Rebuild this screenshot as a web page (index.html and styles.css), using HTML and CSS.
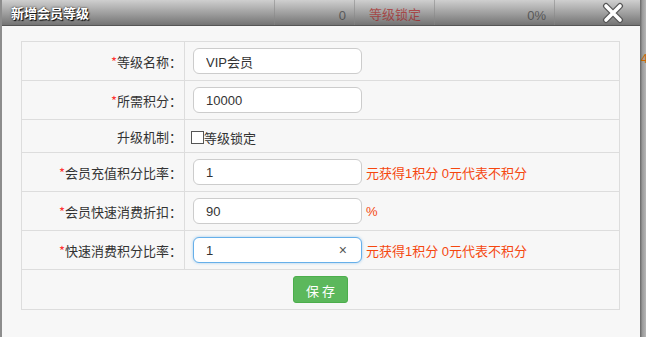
FILE: index.html
```html
<!doctype html>
<html>
<head>
<meta charset="utf-8">
<title>新增会员等级</title>
<link rel="stylesheet" href="styles.css">
</head>
<body>
<div class="wrap">
	<div class="dlg">
		<div class="dlg-head">
			<div class="ghost">
				<span class="g1"></span>
				<span class="g2">0</span>
				<span class="g3">等级锁定</span>
				<span class="g4">0%</span>
				<span class="g5"></span>
			</div>
			<h2 class="dlg-title">新增会员等级</h2>
			<a class="dlg-close" href="javascript:;">
				<svg width="24" height="22" viewBox="0 0 24 22"><path d="M5 4L19 18M19 4L5 18" stroke="#555" stroke-width="6" stroke-linecap="round"/><path d="M5 4L19 18M19 4L5 18" stroke="#fff" stroke-width="3.6" stroke-linecap="round"/></svg>
			</a>
		</div>
		<div class="dlg-body">
			<table class="form">
				<tr>
					<th><em>*</em>等级名称：</th>
					<td><input class="ipt" type="text" value="VIP会员"></td>
				</tr>
				<tr>
					<th><em>*</em>所需积分：</th>
					<td><input class="ipt" type="text" value="10000"></td>
				</tr>
				<tr class="chk-row">
					<th>升级机制：</th>
					<td><label class="chk"><span class="box"></span>等级锁定</label></td>
				</tr>
				<tr>
					<th><em>*</em>会员充值积分比率：</th>
					<td><input class="ipt" type="text" value="1"><span class="tip">元获得1积分 0元代表不积分</span></td>
				</tr>
				<tr>
					<th><em>*</em>会员快速消费折扣：</th>
					<td><input class="ipt" type="text" value="90"><span class="tip">%</span></td>
				</tr>
				<tr>
					<th><em>*</em>快速消费积分比率：</th>
					<td><span class="ipt focus"><span>1</span><i class="clr">×</i></span><span class="tip">元获得1积分 0元代表不积分</span></td>
				</tr>
				<tr class="btn-row">
					<td colspan="2"><a class="btn-save" href="javascript:;">保 存</a></td>
				</tr>
			</table>
		</div>
	</div>
	<div class="side"><span>4</span></div>
</div>
</body>
</html>
```

FILE: styles.css
```css
*{ margin:0; padding:0; box-sizing:border-box;}
body{ width:646px; height:337px; overflow:hidden; background:#8a8a8a; font:13px "Liberation Sans","Noto Sans CJK SC",sans-serif; color:#333;}
.wrap{ display:flex; height:337px;}
.dlg{ width:640px; display:flex; flex-direction:column; background:#f7f7f7; border-left:2px solid #8d8d8d;}
.dlg-head{ position:relative; height:26px; background:linear-gradient(#cfcfcf,#a6a6a6 45%,#747474); border-bottom:1px solid #555; display:flex; align-items:center;}
.ghost{ position:absolute; left:-2px; top:0; height:25px; display:flex; opacity:.55; color:#222;}
.ghost span{ display:flex; align-items:flex-end; justify-content:flex-end; padding:0 8px 2px 0; border-right:1px solid #888; height:25px;}
.ghost .g1{ width:275px;}
.ghost .g2{ width:80px;}
.ghost .g3{ width:80px; justify-content:flex-start; padding-left:14px; color:#a00;}
.ghost .g4{ width:120px;}
.ghost .g5{ width:80px; border-right:0;}
.dlg-title{ position:relative; margin-left:9px; font:bold 13px "Noto Sans CJK SC",sans-serif; color:#fff; text-shadow:0 0 2px #222,1px 1px 1px #000;}
.dlg-close{ position:absolute; right:15px; top:2px; display:block;}
.dlg-body{ flex:1; padding:15px 0 0 19px;}
.form{ width:599px; border-collapse:collapse; background:#f7f7f7;}
.form th,.form td{ border:1px solid #ddd; height:39px; font-family:"Noto Sans CJK SC",sans-serif;}
.form th{ width:163px; text-align:right; font-weight:normal; padding-right:2px; color:#333;}
.form th em{ font-style:normal; color:#f33;}
.form td{ padding-left:8px; white-space:nowrap;}
.chk-row th,.chk-row td{ height:33px;}
.ipt{ display:inline-flex; align-items:center; justify-content:space-between; vertical-align:middle; width:169px; height:26px; border:1px solid #ccc; border-radius:6px; background:#fff; padding:0 12px; font:13px "Liberation Sans","Noto Sans CJK SC",sans-serif; color:#333; outline:none;}
.ipt.focus{ border-color:#66afe9; box-shadow:0 0 3px rgba(102,175,233,.6);}
.clr{ font-style:normal; color:#555; font-size:14px; margin-right:2px;}
.tip{ vertical-align:middle; margin-left:4px; color:#f5470f; font-family:"Liberation Sans","Noto Sans CJK SC",sans-serif;}
.chk{ display:inline-flex; align-items:center; margin-left:-2px; position:relative; top:2px;}
.chk .box{ width:13px; height:13px; border:1px solid #555; background:#fff;}
.btn-row td{ height:40px; text-align:center; padding:0;}
.btn-save{ display:inline-block; width:55px; height:27px; line-height:27px; background:#5cb85c; border:1px solid #4cae4c; border-radius:3px; color:#fff; text-decoration:none; font-size:13px;}
.side{ flex:1; background:linear-gradient(90deg,#666,#9a9a9a 40%,#b5b5b5); position:relative;}
.side span{ position:absolute; left:1px; top:52px; font-size:12px; color:#c60;}
```
